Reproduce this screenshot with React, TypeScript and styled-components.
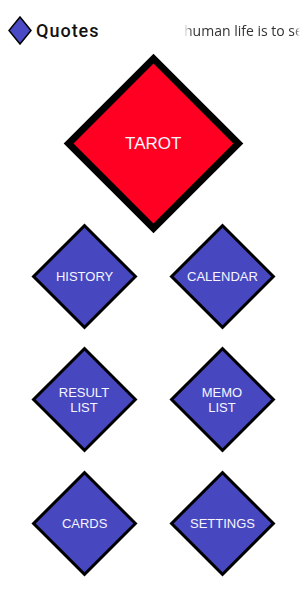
import { Fragment } from "react";
import styled, { createGlobalStyle } from "styled-components";

const GlobalStyle = createGlobalStyle`
  * {
    box-sizing: border-box;
  }
  body {
    margin: 0;
    background: #ffffff;
    font-family: "Liberation Sans", Arial, sans-serif;
  }
`;

const Page = styled.div`
  width: 306px;
  height: 592px;
  overflow: hidden;
  background: #ffffff;
`;

const Header = styled.header`
  display: flex;
  flex-direction: row;
  align-items: center;
  justify-content: space-between;
  height: 53px;
  padding: 7px 6px 0 8px;
`;

const Brand = styled.div`
  display: flex;
  flex-direction: row;
  align-items: center;
  gap: 4px;
`;

const Title = styled.span`
  font-family: Roboto, "Liberation Sans", sans-serif;
  font-size: 18px;
  font-weight: 500;
  letter-spacing: 1px;
  color: #111111;
`;

// marquee strip, text runs off the right edge
const Ticker = styled.div`
  width: 116px;
  overflow: hidden;
  white-space: nowrap;
  font-family: "Open Sans", "Noto Sans", sans-serif;
  font-size: 14px;
  color: #333333;
  -webkit-mask-image: linear-gradient(to right, transparent 0, #000 8px, #000 111px, transparent 116px);
  mask-image: linear-gradient(to right, transparent 0, #000 8px, #000 111px, transparent 116px);
`;

const Main = styled.main`
  display: flex;
  flex-direction: column;
  align-items: center;
`;

// black outer square, rotated into a diamond; the border is its padding
const Diamond = styled.button<{ $size: number; $border: number }>`
  display: flex;
  width: ${(p) => p.$size}px;
  height: ${(p) => p.$size}px;
  padding: ${(p) => p.$border}px;
  margin: 0;
  border: none;
  border-radius: 0;
  background: #000000;
  transform: rotate(45deg);
  cursor: pointer;
`;

const Face = styled.span<{ $color: string; $fontSize: number }>`
  display: flex;
  flex: 1;
  min-width: 0;
  min-height: 0;
  align-items: center;
  justify-content: center;
  background: ${(p) => p.$color};
  font-family: "Liberation Sans", Arial, sans-serif;
  font-size: ${(p) => p.$fontSize}px;
  color: #f6f6ff;
`;

const Label = styled.span`
  display: block;
  flex-shrink: 0;
  transform: rotate(-45deg);
  white-space: nowrap;
  text-align: center;
  line-height: 15px;
`;

const TarotSlot = styled.div`
  margin-top: 26.5px;
`;

const Grid = styled.div`
  display: grid;
  grid-template-columns: 75px 75px;
  column-gap: 63px;
  row-gap: 48.5px;
  margin-top: 32px;
`;

const menu: string[][] = [
  ["HISTORY"],
  ["CALENDAR"],
  ["RESULT", "LIST"],
  ["MEMO", "LIST"],
  ["CARDS"],
  ["SETTINGS"],
];

function BrandIcon() {
  return (
    <svg width="24" height="29" viewBox="0 0 24 29">
      <polygon points="12,1 23,14.5 12,28 1,14.5" fill="#4a4ac4" stroke="#000" strokeWidth="1.5" />
    </svg>
  );
}

export default function App() {
  return (
    <Page>
      <GlobalStyle />
      <Header>
        <Brand>
          <BrandIcon />
          <Title>Quotes</Title>
        </Brand>
        <Ticker>human life is to see what's beyond</Ticker>
      </Header>
      <Main>
        <TarotSlot>
          <Diamond $size={127} $border={7}>
            <Face $color="#ff0022" $fontSize={17}>
              <Label>TAROT</Label>
            </Face>
          </Diamond>
        </TarotSlot>
        <Grid>
          {menu.map((lines) => (
            <Diamond key={lines.join(" ")} $size={75} $border={3}>
              <Face $color="#4747bf" $fontSize={13}>
                <Label>
                  {lines.map((l, i) => (
                    <Fragment key={l}>
                      {i > 0 && <br />}
                      {l}
                    </Fragment>
                  ))}
                </Label>
              </Face>
            </Diamond>
          ))}
        </Grid>
      </Main>
    </Page>
  );
}
